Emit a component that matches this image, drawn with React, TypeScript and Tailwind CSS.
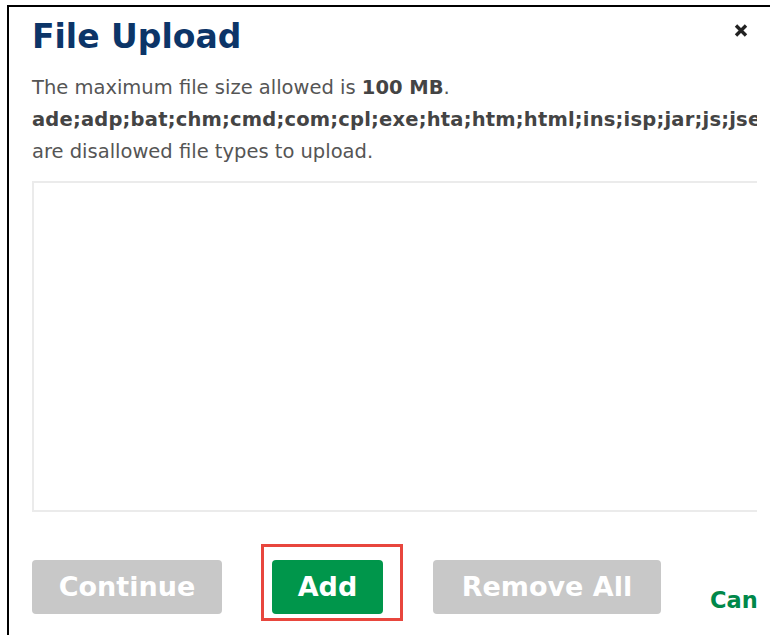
const BLOCKED =
  'ade;adp;bat;chm;cmd;com;cpl;exe;hta;htm;html;ins;isp;jar;js;jse;lib;lnk;mde;msc;msp;mst;pif;scr;sct;shb;sys;vb;vbe;vbs;vxd;wsc;wsf;wsh'

function CloseIcon() {
  return (
    <svg width="14" height="15" viewBox="0 0 14 15" className="block">
      <path d="M2 2.5 L12 12.5 M12 2.5 L2 12.5" stroke="#222" strokeWidth="3.4" strokeLinecap="butt" />
    </svg>
  )
}

export default function App() {
  return (
    <div
      className="h-[635px] w-[770px] overflow-hidden bg-white pl-[7px] pt-[5px]"
      style={{ fontFamily: '"DejaVu Sans", Verdana, sans-serif' }}
    >
      <div className="h-full border-l-2 border-t-2 border-black">
        <div className="w-[748px] overflow-hidden pb-[16px] pl-[23px]">
          {/* header */}
          <div className="mt-[10px] flex h-[40px] items-start justify-between">
            <h1 className="text-[33px] leading-[40px] font-bold text-[#0c3568]">File Upload</h1>
            <button className="mr-[9px] mt-[6px]">
              <CloseIcon />
            </button>
          </div>

          {/* limits */}
          <div className="mt-[15px] text-[19.5px] leading-[32px] text-[#555]">
            <p>
              The maximum file size allowed is <b className="text-[#444]">100 MB</b>.
            </p>
            <p className="whitespace-nowrap font-bold tracking-[0.2px] text-[#444]">{BLOCKED}</p>
            <p>are disallowed file types to upload.</p>
          </div>

          {/* drop zone */}
          <div className="mt-[13px] h-[331px] w-[760px] border-2 border-[#ebebeb] bg-white" />

          {/* actions */}
          <div className="mt-[48px] flex items-start gap-[50px] whitespace-nowrap">
            <button className="h-[54px] w-[190px] shrink-0 rounded-[4px] bg-[#c8c8c8] text-[27px] font-bold text-white">
              Continue
            </button>
            <div className="relative shrink-0">
              <button className="h-[54px] w-[111px] rounded-[4px] bg-[#00964b] text-[27px] font-bold text-white">
                Add
              </button>
              <div className="pointer-events-none absolute -left-[11px] -top-[16px] h-[77px] w-[142px] border-[3px] border-[#e8463d]" />
            </div>
            <button className="h-[54px] w-[228px] shrink-0 rounded-[4px] bg-[#c8c8c8] text-[27px] font-bold text-white">
              Remove All
            </button>
            <button className="-ml-[1px] mt-[27px] shrink-0 text-[22.5px] leading-[26px] font-bold text-[#00884a]">
              Cancel
            </button>
          </div>
        </div>
      </div>
    </div>
  )
}
